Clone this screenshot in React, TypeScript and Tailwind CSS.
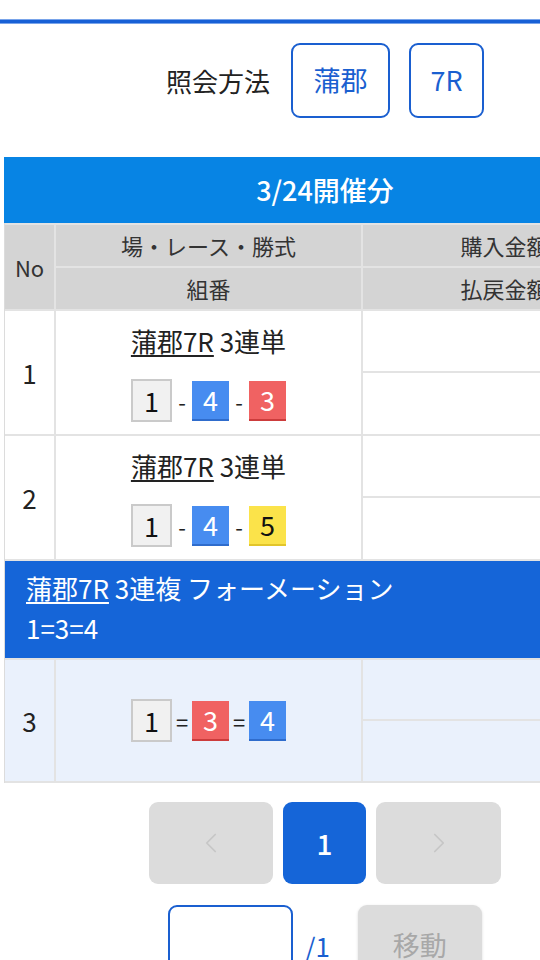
import { ChevronLeft, ChevronRight } from "lucide-react"

type Pick = { n: string; color: "gray" | "blue" | "red" | "yellow" }

const Box = ({ n, color }: Pick) => {
  if (color === "gray") {
    return (
      <div className="w-[41px] h-[43px] flex items-center justify-center bg-[#f1f1f1] border-2 border-[#cacaca] text-[#111] text-[27px] leading-none">
        {n}
      </div>
    )
  }
  const cls =
    color === "blue"
      ? "bg-[#478cf0] border-b-2 border-[#2f6ccc] text-white"
      : color === "red"
      ? "bg-[#f06262] border-b-2 border-[#cc3c3c] text-white"
      : "bg-[#fbe34a] border-b-2 border-[#e2c52a] text-[#111]"
  return (
    <div className={"w-[37px] h-[40px] flex items-center justify-center text-[27px] leading-none " + cls}>
      {n}
    </div>
  )
}

const Picks = ({ picks, sep }: { picks: Pick[]; sep: string }) => (
  <div className="flex items-center justify-center">
    {picks.map((p, i) => (
      <div key={i} className="flex items-center">
        {i > 0 && <span className="w-[20px] text-center text-[22px] text-[#222] leading-none">{sep}</span>}
        <Box {...p} />
      </div>
    ))}
  </div>
)

const EmptyAmounts = ({ h1, h2, bg }: { h1: string; h2: string; bg: string }) => (
  <div className="flex flex-col gap-[2px]">
    <div className={h1 + " " + bg} />
    <div className={h2 + " " + bg} />
  </div>
)

const rows = [
  { no: "1", picks: [{ n: "1", color: "gray" }, { n: "4", color: "blue" }, { n: "3", color: "red" }] as Pick[] },
  { no: "2", picks: [{ n: "1", color: "gray" }, { n: "4", color: "blue" }, { n: "5", color: "yellow" }] as Pick[] },
]

export default function App() {
  return (
    <div
      className="w-[540px] h-[960px] overflow-hidden bg-white text-[#222]"
      style={{ fontFamily: '"Noto Sans CJK JP", "Noto Sans", sans-serif' }}
    >
      <div className="w-[650px] pt-[19px]">
        {/* top line */}
        <div className="h-[5px] bg-[#1760d6] border-y border-[#79a4ea]" />

        {/* query method */}
        <div className="flex items-center justify-center mt-[19px]">
          <span className="text-[26px] text-[#222] mr-[21px]">照会方法</span>
          <button className="w-[99px] h-[75px] rounded-[9px] border-2 border-[#1a5fd0] text-[#1a5fd0] text-[27px] bg-white">
            蒲郡
          </button>
          <button className="w-[75px] h-[75px] rounded-[9px] border-2 border-[#1a5fd0] text-[#1a5fd0] text-[27px] bg-white ml-[19px]">
            7R
          </button>
        </div>

        {/* table */}
        <div className="ml-[4px] w-[642px] mt-[39px]">
          <div className="h-[66px] bg-[#0784e4] flex items-center justify-center text-white text-[27px] font-medium">
            3/24開催分
          </div>

          <div className="bg-[#e3e3e3] border-l border-[#dcdcdc] pt-[2px] pb-[2px] flex flex-col gap-[2px]">
            {/* header */}
            <div className="grid grid-cols-[49px_305px_1fr] gap-x-[2px] text-[22px] text-[#333]">
              <div className="row-span-2 bg-[#d4d4d4] flex items-center justify-center">No</div>
              <div className="h-[41px] bg-[#d4d4d4] flex items-center justify-center">場・レース・勝式</div>
              <div className="h-[41px] bg-[#d4d4d4] flex items-center justify-center">購入金額</div>
              <div className="h-[41px] mt-[2px] bg-[#d4d4d4] flex items-center justify-center">組番</div>
              <div className="h-[41px] mt-[2px] bg-[#d4d4d4] flex items-center justify-center">払戻金額</div>
            </div>

            {rows.map((r) => (
              <div key={r.no} className="grid grid-cols-[49px_305px_1fr] gap-x-[2px] h-[123px]">
                <div className="bg-white flex items-center justify-center text-[26px]">{r.no}</div>
                <div className="bg-white flex flex-col items-center justify-center gap-[20px]">
                  <div className="text-[26px] leading-[36px] text-[#222]">
                    <span className="underline decoration-[1.5px] underline-offset-[3px]">蒲郡7R</span> 3連単
                  </div>
                  <Picks picks={r.picks} sep="-" />
                </div>
                <EmptyAmounts h1="h-[60px]" h2="h-[61px]" bg="bg-white" />
              </div>
            ))}

            {/* formation group */}
            <div className="h-[97px] bg-[#1565d8] text-white text-[26px] leading-[40px] pl-[21px] pt-[7px]">
              <div>
                <span className="underline decoration-[1.5px] underline-offset-[3px]">蒲郡7R</span> 3連複 フォーメーション
              </div>
              <div>1=3=4</div>
            </div>

            <div className="grid grid-cols-[49px_305px_1fr] gap-x-[2px] h-[121px]">
              <div className="bg-[#eaf1fc] flex items-center justify-center text-[26px]">3</div>
              <div className="bg-[#eaf1fc] flex items-center justify-center">
                <Picks
                  picks={[{ n: "1", color: "gray" }, { n: "3", color: "red" }, { n: "4", color: "blue" }]}
                  sep="="
                />
              </div>
              <EmptyAmounts h1="h-[59px]" h2="h-[60px]" bg="bg-[#eaf1fc]" />
            </div>
          </div>
        </div>

        {/* pagination */}
        <div className="flex justify-center gap-[10px] mt-[19px]">
          <button className="w-[124px] h-[82px] rounded-[9px] bg-[#dcdcdc] flex items-center justify-center text-[#c6c6c6]">
            <ChevronLeft size={34} strokeWidth={1.2} />
          </button>
          <button className="w-[83px] h-[82px] rounded-[9px] bg-[#1565d8] text-white text-[28px] font-medium">
            1
          </button>
          <button className="w-[125px] h-[82px] rounded-[9px] bg-[#dcdcdc] flex items-center justify-center text-[#c6c6c6]">
            <ChevronRight size={34} strokeWidth={1.2} />
          </button>
        </div>

        <div className="flex justify-center items-center mt-[21px]">
          <input className="w-[125px] h-[80px] rounded-[9px] border-2 border-[#1a5fd0] bg-white outline-none" />
          <span className="ml-[12px] mr-[28px] text-[26px] text-[#1a5fd0]">/1</span>
          <button className="w-[124px] h-[80px] rounded-[9px] bg-[#dcdcdc] text-[#a8a8a8] text-[27px] shadow-[0_1px_3px_rgba(0,0,0,0.15)]">
            移動
          </button>
        </div>
      </div>
    </div>
  )
}
